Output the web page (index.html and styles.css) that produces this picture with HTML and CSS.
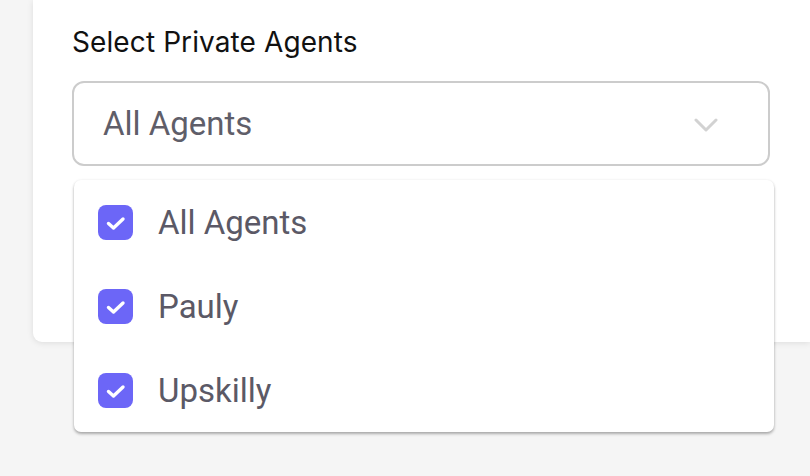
FILE: index.html
```html
<!DOCTYPE html>
<html>
<head>
<meta charset="utf-8">
<link rel="stylesheet" href="styles.css">
</head>
<body>
<div class="page">
  <div class="card">
    <div class="label">Select Private Agents</div>
    <div class="field">
      <div class="select">
        <span class="value">All Agents</span>
        <svg class="chev" width="24" height="14" viewBox="0 0 24 14"><polyline points="2,2 12,12 22,2" fill="none" stroke="#d2d2d2" stroke-width="3" stroke-linecap="round" stroke-linejoin="round"/></svg>
      </div>
      <div class="menu">
        <div class="item">
          <span class="box"><svg width="35" height="35" viewBox="0 0 35 35"><polyline points="10.5,18.5 15.5,23 25,14" fill="none" stroke="#fff" stroke-width="3.4" stroke-linecap="round" stroke-linejoin="round"/></svg></span>
          <span class="text">All Agents</span>
        </div>
        <div class="item">
          <span class="box"><svg width="35" height="35" viewBox="0 0 35 35"><polyline points="10.5,18.5 15.5,23 25,14" fill="none" stroke="#fff" stroke-width="3.4" stroke-linecap="round" stroke-linejoin="round"/></svg></span>
          <span class="text">Pauly</span>
        </div>
        <div class="item">
          <span class="box"><svg width="35" height="35" viewBox="0 0 35 35"><polyline points="10.5,18.5 15.5,23 25,14" fill="none" stroke="#fff" stroke-width="3.4" stroke-linecap="round" stroke-linejoin="round"/></svg></span>
          <span class="text">Upskilly</span>
        </div>
      </div>
    </div>
  </div>
</div>
</body>
</html>
```
FILE: styles.css
```css
* { box-sizing: border-box; }
html, body { margin: 0; padding: 0; }
body {
  background: #f5f5f5;
  width: 810px;
  height: 476px;
  overflow: hidden;
  font-family: Roboto, "Liberation Sans", sans-serif;
}
.page {
  padding-left: 33px;
}
.card {
  background: #fff;
  height: 342px;
  border-radius: 0 0 0 9px;
  box-shadow: 0 1px 6px rgba(0,0,0,0.10);
  padding: 24px 0 0 39px;
}
.label {
  font-family: Inter, "Noto Sans", sans-serif;
  font-size: 28px;
  line-height: 36px;
  color: #111;
  letter-spacing: 0.1px;
}
.field {
  position: relative;
  margin-top: 21px;
  width: 698px;
}
.select {
  height: 85px;
  border: 2px solid #cccccc;
  border-radius: 12px;
  display: flex;
  align-items: center;
  justify-content: space-between;
  padding: 0 50px 0 29px;
}
.value {
  font-size: 33px;
  color: #5f5e69;
}
.chev { display: block; margin-top: 2px; }
.menu {
  position: absolute;
  top: 99px;
  left: 2px;
  width: 700px;
  background: #fff;
  border-radius: 7px;
  box-shadow: 0 2px 3px rgba(0,0,0,0.30), 0 0 3px rgba(0,0,0,0.06);
}
.item {
  height: 84px;
  display: flex;
  align-items: center;
  padding-left: 24px;
  gap: 25px;
}
.box {
  width: 35px;
  height: 35px;
  border-radius: 8px;
  background: #6c66f7;
  display: block;
}
.box svg { display: block; }
.text {
  font-size: 33px;
  color: #5b5966;
}
```
